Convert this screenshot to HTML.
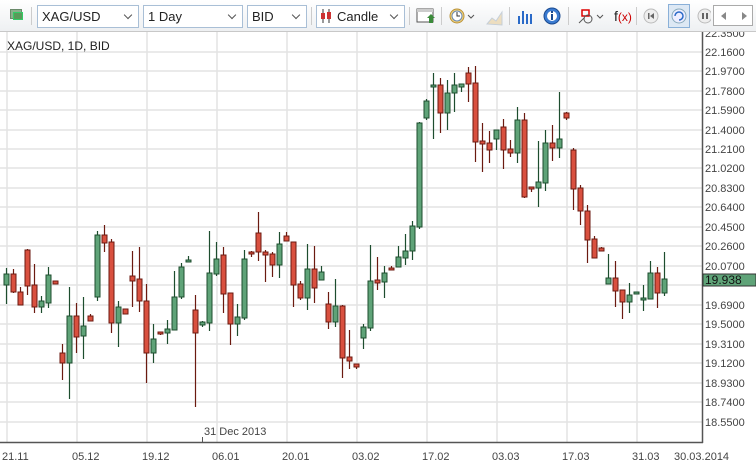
<!DOCTYPE html>
<html><head><meta charset="utf-8"><style>
*{margin:0;padding:0;box-sizing:border-box}
body{width:756px;height:466px;overflow:hidden;background:#fff;font-family:"Liberation Sans",sans-serif;position:relative}
.tb{position:absolute;left:0;top:0;width:756px;height:32px;background:linear-gradient(#fff,#eef0f2);border-bottom:1px solid #c8c8c8}
.dd{position:absolute;top:5px;height:23px;border:1px solid #a9bfd6;background:#fff;font-size:13px;color:#222;padding:3px 0 0 4px}
.dd:after{content:"";position:absolute;right:7px;top:6px;width:5px;height:5px;border-right:1px solid #555;border-bottom:1px solid #555;transform:rotate(45deg)}
.sep{position:absolute;top:7px;width:1px;height:18px;background:#ccc}
</style></head><body>
<div class="tb">
 <div style="position:absolute;left:10px;top:9px;width:12px;height:10px;background:#8cb08c;border:1px solid #6a8a6a"></div>
 <div style="position:absolute;left:13px;top:12px;width:10px;height:8px;background:#5a9a5a;border:1px solid #3c6"></div>
 <div class="sep" style="left:31px"></div>
 <div class="dd" style="left:37px;width:102px">XAG/USD</div>
 <div class="dd" style="left:143px;width:100px">1 Day</div>
 <div class="dd" style="left:247px;width:60px">BID</div>
 <div class="sep" style="left:311px"></div>
 <div class="dd" style="left:316px;width:89px;padding-left:20px">Candle</div>
 <svg style="position:absolute;left:320px;top:9px" width="12" height="14"><line x1="3" y1="0" x2="3" y2="14" stroke="#333"/><rect x="1" y="4" width="4" height="6" fill="#c33"/><line x1="9" y1="0" x2="9" y2="14" stroke="#333"/><rect x="7" y="3" width="4" height="7" fill="#c33"/></svg>
 <div class="sep" style="left:409px"></div>
 <svg style="position:absolute;left:416px;top:8px" width="20" height="18"><rect x="1" y="1" width="16" height="13" fill="#fff" stroke="#555"/><rect x="1" y="1" width="16" height="3" fill="#ccc"/><path d="M11 10l4-4 4 4h-2v5h-4v-5z" fill="#3a8a3a"/></svg>
 <div class="sep" style="left:441px"></div>
 <svg style="position:absolute;left:449px;top:8px" width="30" height="18"><circle cx="8" cy="8" r="7" fill="#f4d27a" stroke="#b8923a"/><circle cx="8" cy="8" r="5" fill="#fff" stroke="#6a8ab0"/><path d="M8 4v4h3" stroke="#333" fill="none"/><path d="M19 7l3 3 3-3" stroke="#555" fill="none"/></svg>
 <svg style="position:absolute;left:486px;top:8px" width="18" height="18" opacity=".5"><path d="M1 16l5-6 4 3 6-9v13z" fill="#e8c88a" stroke="#9ab"/></svg>
 <div class="sep" style="left:509px"></div>
 <svg style="position:absolute;left:517px;top:8px" width="18" height="17"><rect x="1" y="8" width="2" height="8" fill="#2a6ac8"/><rect x="5" y="3" width="2" height="13" fill="#2a6ac8"/><rect x="9" y="6" width="2" height="10" fill="#2a6ac8"/><rect x="13" y="6" width="2" height="10" fill="#2a6ac8"/></svg>
 <svg style="position:absolute;left:543px;top:7px" width="18" height="18"><circle cx="9" cy="9" r="8" fill="#3a7ad0" stroke="#1a4a90"/><circle cx="9" cy="9" r="5" fill="#fff"/><rect x="8" y="7" width="2" height="6" fill="#1a4a90"/><rect x="8" y="4" width="2" height="2" fill="#1a4a90"/></svg>
 <div class="sep" style="left:568px"></div>
 <svg style="position:absolute;left:578px;top:8px" width="30" height="18"><rect x="4" y="2" width="7" height="6" fill="none" stroke="#d00" stroke-width="1.5"/><circle cx="10" cy="11" r="4" fill="none" stroke="#555"/><path d="M1 15l5-5" stroke="#555"/><path d="M19 7l3 3 3-3" stroke="#555" fill="none"/></svg>
 <div style="position:absolute;left:614px;top:8px;font-size:14px;color:#222">f<span style="color:#c00;font-size:12px">(x)</span></div>
 <div class="sep" style="left:636px"></div>
 <svg style="position:absolute;left:643px;top:8px" width="16" height="16"><circle cx="8" cy="8" r="7" fill="#eee" stroke="#bbb"/><rect x="5" y="5" width="1.5" height="6" fill="#666"/><path d="M11 5v6l-4-3z" fill="#666"/></svg>
 <div style="position:absolute;left:668px;top:4px;width:22px;height:24px;background:#dde8f4;border:1px solid #8ab0d8"></div>
 <svg style="position:absolute;left:671px;top:8px" width="16" height="16"><circle cx="8" cy="8" r="7" fill="#eef" stroke="#8ab"/><path d="M4 8a4 4 0 1 1 4 4" stroke="#2a6ac8" fill="none" stroke-width="1.5"/></svg>
 <svg style="position:absolute;left:697px;top:8px" width="14" height="16"><circle cx="8" cy="8" r="7" fill="#eee" stroke="#bbb"/><rect x="5" y="5" width="2" height="6" fill="#666"/><rect x="9" y="5" width="2" height="6" fill="#666"/></svg>
 <div style="position:absolute;left:713px;top:5px;width:40px;height:21px;border:1px solid #aaa;background:#fff"></div>
 <svg style="position:absolute;left:718px;top:10px" width="32" height="12"><path d="M8 2v8l-5-4z" fill="#888"/><path d="M24 2v8l5-4z" fill="#888"/></svg>
</div>

<svg style="position:absolute;left:0;top:32px" width="756" height="434" viewBox="0 32 756 434">
<g stroke="#e3e3e3" stroke-width="1.5">
<line x1="7" y1="32" x2="7" y2="442"/><line x1="77" y1="32" x2="77" y2="442"/><line x1="147" y1="32" x2="147" y2="442"/><line x1="217" y1="32" x2="217" y2="442"/><line x1="287" y1="32" x2="287" y2="442"/><line x1="357" y1="32" x2="357" y2="442"/><line x1="427" y1="32" x2="427" y2="442"/><line x1="497" y1="32" x2="497" y2="442"/><line x1="567" y1="32" x2="567" y2="442"/><line x1="637" y1="32" x2="637" y2="442"/>
<line x1="0" y1="52" x2="702" y2="52"/><line x1="0" y1="71" x2="702" y2="71"/><line x1="0" y1="91" x2="702" y2="91"/><line x1="0" y1="110" x2="702" y2="110"/><line x1="0" y1="130" x2="702" y2="130"/><line x1="0" y1="149" x2="702" y2="149"/><line x1="0" y1="168" x2="702" y2="168"/><line x1="0" y1="188" x2="702" y2="188"/><line x1="0" y1="207" x2="702" y2="207"/><line x1="0" y1="227" x2="702" y2="227"/><line x1="0" y1="246" x2="702" y2="246"/><line x1="0" y1="266" x2="702" y2="266"/><line x1="0" y1="285" x2="702" y2="285"/><line x1="0" y1="305" x2="702" y2="305"/><line x1="0" y1="324" x2="702" y2="324"/><line x1="0" y1="344" x2="702" y2="344"/><line x1="0" y1="363" x2="702" y2="363"/><line x1="0" y1="383" x2="702" y2="383"/><line x1="0" y1="402" x2="702" y2="402"/><line x1="0" y1="422" x2="702" y2="422"/>
</g>
<line x1="702.5" y1="32" x2="702.5" y2="443" stroke="#555" stroke-width="1.5"/>
<line x1="0" y1="442.5" x2="703" y2="442.5" stroke="#555" stroke-width="1.5"/>
<line x1="202.5" y1="437" x2="202.5" y2="442" stroke="#555"/>
<g id="c"></g>
<rect x="703" y="274" width="53" height="12" fill="#5fa378" stroke="#333"/>
<g font-family="Liberation Sans, sans-serif" font-size="11" fill="#444">
<text x="705" y="37">22.3500</text><text x="705" y="56">22.1600</text><text x="705" y="75">21.9700</text><text x="705" y="95">21.7800</text><text x="705" y="114">21.5900</text><text x="705" y="134">21.4000</text><text x="705" y="153">21.2100</text><text x="705" y="172">21.0200</text><text x="705" y="192">20.8300</text><text x="705" y="211">20.6400</text><text x="705" y="231">20.4500</text><text x="705" y="250">20.2600</text><text x="705" y="270">20.0700</text><text x="705" y="309">19.6900</text><text x="705" y="328">19.5000</text><text x="705" y="348">19.3100</text><text x="705" y="367">19.1200</text><text x="705" y="387">18.9300</text><text x="705" y="406">18.7400</text><text x="705" y="426">18.5500</text>
<text x="705" y="284" fill="#111" font-size="12">19.938</text>
<text x="204" y="435">31 Dec 2013</text>
<text x="2" y="460">21.11</text><text x="72" y="460">05.12</text><text x="142" y="460">19.12</text><text x="212" y="460">06.01</text><text x="282" y="460">20.01</text><text x="352" y="460">03.02</text><text x="422" y="460">17.02</text><text x="492" y="460">03.03</text><text x="562" y="460">17.03</text><text x="632" y="460">31.03</text><text x="674" y="460">30.03.2014</text>
<text x="7" y="50" font-size="12" fill="#222">XAG/USD, 1D, BID</text>
</g>
</svg>
<script>
var d="G6,268,274,285,304;R13,269,274,292,293;R20,287,292,305,305;R27,249,250,286,295;R34,264,285,307,313;G41,296,301,307,313;G48,267,275,303,308;R55,281,281,284,284;R62,344,353,363,380;G69,287,316,363,399;R76,303,316,337,353;G83,297,326,336,359;R90,314,316,321,321;G97,231,235,297,301;R104,225,235,243,252;R111,239,242,323,333;G118,301,307,323,347;R125,309,309,314,314;R132,251,276,281,307;R139,247,279,301,312;R146,284,301,353,383;G153,324,339,353,363;R160,332,332,334,335;G167,320,329,333,344;G174,271,297,330,330;G181,263,267,297,299;G188,256,260,262,262;R195,295,310,333,407;G202,321,322,325,327;G209,231,273,323,331;G216,242,259,274,276;R223,247,255,294,313;R230,293,293,324,345;G237,304,317,324,336;G244,250,259,318,320;R251,251,252,254,257;R258,212,233,252,261;R265,250,252,255,282;R272,252,254,265,277;G279,232,244,265,278;R286,232,236,241,241;R293,242,242,285,307;R300,281,284,298,300;G307,244,269,298,310;R314,246,269,288,303;G321,266,272,280,280;R328,292,304,322,329;G335,279,306,322,327;R342,305,306,358,378;R349,330,357,361,369;R356,364,364,367,369;G363,324,327,338,349;G370,245,281,328,331;R377,257,280,283,290;G384,266,273,282,298;R391,266,268,270,270;G398,246,257,267,267;G405,234,251,258,265;G412,221,226,251,260;G419,122,123,227,229;G426,99,101,118,120;G433,73,85,87,139;R440,78,85,113,133;G447,80,93,113,130;G454,73,85,93,112;G461,84,84,87,92;R468,67,73,84,102;R475,66,83,142,162;R482,123,141,144,172;R489,131,143,150,163;G496,130,130,139,150;R503,119,127,150,169;R510,140,149,153,157;G517,107,120,153,163;R524,113,120,197,198;R531,187,187,189,192;G538,141,182,188,207;G545,130,143,183,191;R552,125,143,148,161;G559,92,139,148,158;R566,112,113,118,120;R573,148,150,189,210;R580,185,188,211,225;R587,205,211,240,263;R594,236,239,258,258;R601,247,248,251,251;G608,254,278,284,284;R615,261,278,291,307;R622,290,290,302,319;G629,283,295,302,313;G636,292,292,294,294;G643,285,298,300,311;G650,261,273,299,299;R657,267,273,293,308;G664,252,279,293,296";
var s="";d.split(";").forEach(function(e){var c=e[0],v=e.slice(1).split(",").map(Number);var st=c=="R"?"#6b1a10":"#1d4d2e",f=c=="R"?"#d9503f":"#5fa378";var x=v[0]+0.5;s+='<line x1="'+x+'" y1="'+v[1]+'" x2="'+x+'" y2="'+v[4]+'" stroke="'+st+'" stroke-width="1.2"/>';var h=Math.max(v[3]-v[2],1.5);s+='<rect x="'+(v[0]-2)+'" y="'+v[2]+'" width="5" height="'+h+'" fill="'+f+'" stroke="'+st+'" stroke-width="1"/>';});
document.getElementById("c").innerHTML=s;
</script>
</body></html>
